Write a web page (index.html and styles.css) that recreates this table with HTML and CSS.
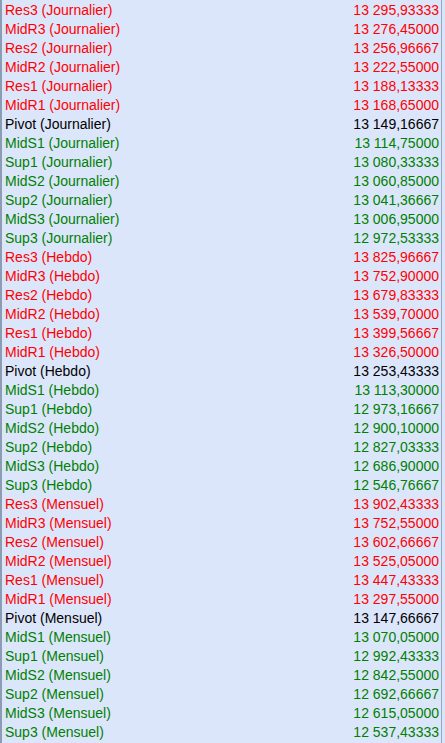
FILE: index.html
```html
<!DOCTYPE html>
<html>
<head>
<meta charset="utf-8">
<link rel="stylesheet" href="styles.css">
</head>
<body>
<div class="panel">
  <div class="row red"><span>Res3 (Journalier)</span><span>13 295,93333</span></div>
  <div class="row red"><span>MidR3 (Journalier)</span><span>13 276,45000</span></div>
  <div class="row red"><span>Res2 (Journalier)</span><span>13 256,96667</span></div>
  <div class="row red"><span>MidR2 (Journalier)</span><span>13 222,55000</span></div>
  <div class="row red"><span>Res1 (Journalier)</span><span>13 188,13333</span></div>
  <div class="row red"><span>MidR1 (Journalier)</span><span>13 168,65000</span></div>
  <div class="row black"><span>Pivot (Journalier)</span><span>13 149,16667</span></div>
  <div class="row green"><span>MidS1 (Journalier)</span><span>13 114,75000</span></div>
  <div class="row green"><span>Sup1 (Journalier)</span><span>13 080,33333</span></div>
  <div class="row green"><span>MidS2 (Journalier)</span><span>13 060,85000</span></div>
  <div class="row green"><span>Sup2 (Journalier)</span><span>13 041,36667</span></div>
  <div class="row green"><span>MidS3 (Journalier)</span><span>13 006,95000</span></div>
  <div class="row green"><span>Sup3 (Journalier)</span><span>12 972,53333</span></div>
  <div class="row red"><span>Res3 (Hebdo)</span><span>13 825,96667</span></div>
  <div class="row red"><span>MidR3 (Hebdo)</span><span>13 752,90000</span></div>
  <div class="row red"><span>Res2 (Hebdo)</span><span>13 679,83333</span></div>
  <div class="row red"><span>MidR2 (Hebdo)</span><span>13 539,70000</span></div>
  <div class="row red"><span>Res1 (Hebdo)</span><span>13 399,56667</span></div>
  <div class="row red"><span>MidR1 (Hebdo)</span><span>13 326,50000</span></div>
  <div class="row black"><span>Pivot (Hebdo)</span><span>13 253,43333</span></div>
  <div class="row green"><span>MidS1 (Hebdo)</span><span>13 113,30000</span></div>
  <div class="row green"><span>Sup1 (Hebdo)</span><span>12 973,16667</span></div>
  <div class="row green"><span>MidS2 (Hebdo)</span><span>12 900,10000</span></div>
  <div class="row green"><span>Sup2 (Hebdo)</span><span>12 827,03333</span></div>
  <div class="row green"><span>MidS3 (Hebdo)</span><span>12 686,90000</span></div>
  <div class="row green"><span>Sup3 (Hebdo)</span><span>12 546,76667</span></div>
  <div class="row red"><span>Res3 (Mensuel)</span><span>13 902,43333</span></div>
  <div class="row red"><span>MidR3 (Mensuel)</span><span>13 752,55000</span></div>
  <div class="row red"><span>Res2 (Mensuel)</span><span>13 602,66667</span></div>
  <div class="row red"><span>MidR2 (Mensuel)</span><span>13 525,05000</span></div>
  <div class="row red"><span>Res1 (Mensuel)</span><span>13 447,43333</span></div>
  <div class="row red"><span>MidR1 (Mensuel)</span><span>13 297,55000</span></div>
  <div class="row black"><span>Pivot (Mensuel)</span><span>13 147,66667</span></div>
  <div class="row green"><span>MidS1 (Mensuel)</span><span>13 070,05000</span></div>
  <div class="row green"><span>Sup1 (Mensuel)</span><span>12 992,43333</span></div>
  <div class="row green"><span>MidS2 (Mensuel)</span><span>12 842,55000</span></div>
  <div class="row green"><span>Sup2 (Mensuel)</span><span>12 692,66667</span></div>
  <div class="row green"><span>MidS3 (Mensuel)</span><span>12 615,05000</span></div>
  <div class="row green"><span>Sup3 (Mensuel)</span><span>12 537,43333</span></div>
</div>
</body>
</html>
```

FILE: styles.css
```css
html, body {
  margin: 0;
  padding: 0;
  background: #dbe5fa;
}
body {
  width: 445px;
  height: 743px;
  overflow: hidden;
  font-family: "Liberation Sans", Arial, sans-serif;
  font-size: 14px;
}
.panel {
  width: 439px;
  height: 742px;
  padding-top: 1px;
  border-left: 2px solid #8c9db3;
  border-right: 1px solid #97a8bd;
  background: #dce6fb;
  box-sizing: content-box;
}
.row {
  display: flex;
  justify-content: space-between;
  height: 19px;
  line-height: 19px;
  padding: 0 2px 0 3px;
}
.red { color: #ff0000; }
.green { color: #008000; }
.black { color: #000000; }
```
